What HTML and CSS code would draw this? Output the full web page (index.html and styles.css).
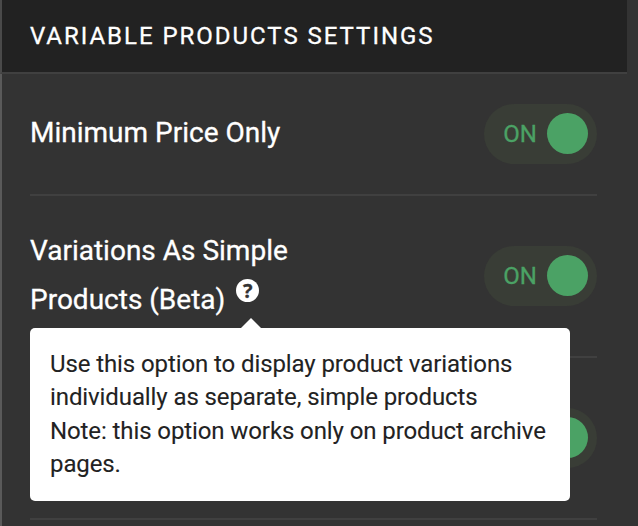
FILE: index.html
```html
<!DOCTYPE html>
<html lang="en">
<head>
<meta charset="utf-8">
<title>Variable Products Settings</title>
<link rel="stylesheet" href="styles.css">
</head>
<body>
<section class="panel">
  <h2 class="panel-title">VARIABLE PRODUCTS SETTINGS</h2>
  <div class="rows">
    <div class="row row-short">
      <div class="label">Minimum Price Only</div>
      <div class="toggle"><span class="state">ON</span><span class="knob"></span></div>
    </div>
    <div class="row">
      <div class="label">Variations As Simple<br>Products (Beta)<span class="help">?<span class="arrow"></span></span>
        <div class="tooltip">
          Use this option to display product variations<br>
          individually as separate, simple products<br>
          Note: this option works only on product archive<br>
          pages.
        </div>
      </div>
      <div class="toggle"><span class="state">ON</span><span class="knob"></span></div>
    </div>
    <div class="row">
      <div class="label"></div>
      <div class="toggle"><span class="knob"></span></div>
    </div>
  </div>
</section>
</body>
</html>
```
FILE: styles.css
```css
* { box-sizing: border-box; }
body {
  margin: 0;
  height: 526px;
  overflow: hidden;
  background: #333;
  color: #fff;
  font-family: Roboto, "Liberation Sans", sans-serif;
  -webkit-text-stroke: 0.3px currentColor;
}
.panel {
  width: 627px;
  height: 526px;
  border-left: 2px solid #5a5a5a;
}
.panel-title {
  margin: 0 0 0 -2px;
  height: 74px;
  padding-left: 28px;
  border-bottom: 2px solid #404040;
  border-left: 2px solid #4a4a4a;
  background: #222;
  font-size: 24px;
  font-weight: 400;
  line-height: 72px;
  letter-spacing: 1.97px;
  white-space: nowrap;
}
.rows { padding: 0 30px 0 28px; }
.row {
  position: relative;
  display: flex;
  align-items: center;
  justify-content: space-between;
  height: 162px;
  border-bottom: 2px solid #404040;
}
.row-short { height: 122px; }
.label {
  font-size: 28px;
  line-height: 49px;
  white-space: nowrap;
  padding-bottom: 3px;
}
.toggle {
  display: flex;
  align-items: center;
  justify-content: flex-end;
  gap: 10px;
  width: 113px;
  height: 60px;
  padding-right: 9px;
  border-radius: 30px;
  background: #393d36;
  color: #4ba265;
}
.state { font-size: 24px; line-height: 60px; }
.knob {
  width: 41px;
  height: 41px;
  margin-bottom: 1px;
  border-radius: 50%;
  background: #4ba265;
}
.help {
  position: relative;
  display: inline-block;
  width: 23px;
  height: 23px;
  margin: -5px 0 0 11px;
  border-radius: 50%;
  background: #fff;
  color: #333;
  font: 700 20px/23px "Open Sans", sans-serif;
  text-align: center;
  vertical-align: 11px;
}
.arrow {
  position: absolute;
  left: 5px;
  top: 39px;
  border: 10px solid transparent;
  border-top: 0;
  border-bottom-color: #fff;
}
.tooltip {
  position: absolute;
  z-index: 2;
  left: 0;
  top: 132px;
  width: 540px;
  height: 173px;
  padding: 19.5px 20px;
  border-radius: 5px;
  background: #fff;
  color: #222;
  font-size: 24px;
  line-height: 33.5px;
  letter-spacing: -0.1px;
  -webkit-text-stroke-width: 0.1px;
}
```
